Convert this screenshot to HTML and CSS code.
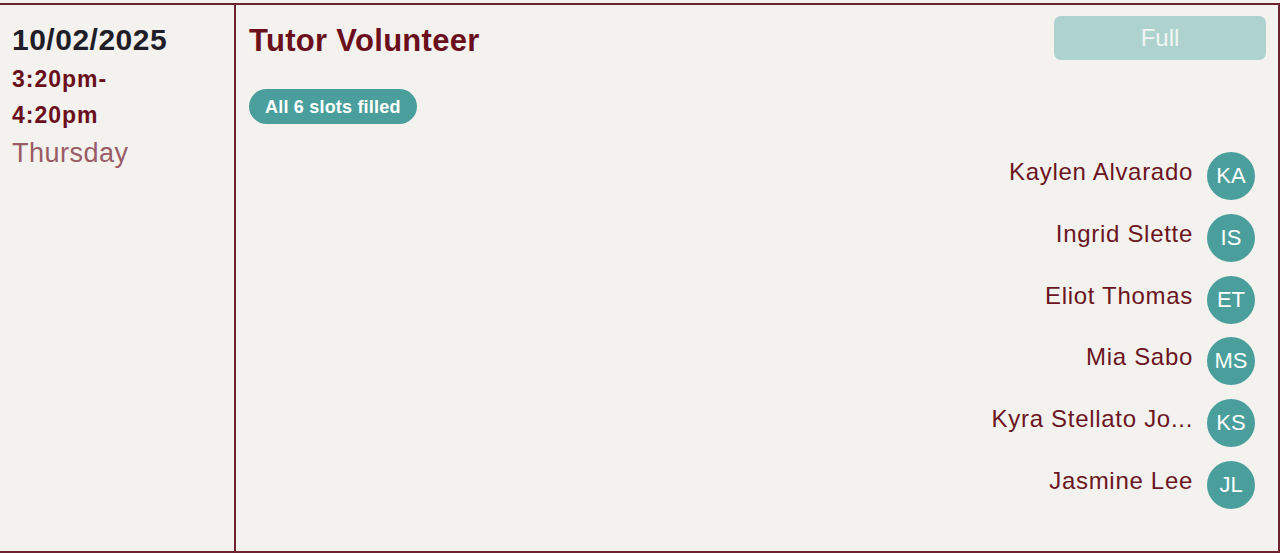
FILE: index.html
```html
<!DOCTYPE html>
<html lang="en">
<head>
<meta charset="utf-8">
<title>Tutor Volunteer</title>
<link rel="stylesheet" href="styles.css">
</head>
<body>
  <div class="slot-row">
    <div class="when">
      <div class="when-date">10/02/2025</div>
      <div class="when-time"><span>3:20pm-</span><span>4:20pm</span></div>
      <div class="when-day">Thursday</div>
    </div>
    <div class="detail">
      <div class="detail-head">
        <h2 class="detail-title">Tutor Volunteer</h2>
        <button class="full-btn" type="button" disabled>Full</button>
      </div>
      <div class="status-pill">All 6 slots filled</div>
      <ul class="people">
        <li class="person"><span class="person-name">Kaylen Alvarado</span><span class="avatar">KA</span></li>
        <li class="person"><span class="person-name">Ingrid Slette</span><span class="avatar">IS</span></li>
        <li class="person"><span class="person-name">Eliot Thomas</span><span class="avatar">ET</span></li>
        <li class="person"><span class="person-name">Mia Sabo</span><span class="avatar">MS</span></li>
        <li class="person"><span class="person-name">Kyra Stellato Jo...</span><span class="avatar">KS</span></li>
        <li class="person"><span class="person-name">Jasmine Lee</span><span class="avatar">JL</span></li>
      </ul>
    </div>
  </div>
</body>
</html>
```

FILE: styles.css
```css
* {
  box-sizing: border-box;
}

html, body {
  margin: 0;
  padding: 0;
  background: #f3f2ee;
  height: 553px;
  overflow: hidden;
}

body {
  font-family: "Liberation Sans", Arial, Helvetica, sans-serif;
  padding-top: 3px;
}

.slot-row {
  display: flex;
  width: 1280px;
  height: 550px;
  border-top: 2px solid #6d2430;
  border-right: 2px solid #6d2430;
  border-bottom: 2px solid #6d2430;
  background: #f3f2ee;
}

.when {
  width: 236px;
  flex: none;
  border-right: 2px solid #6d2430;
  padding: 17px 12px 0 12px;
}

.when-date {
  font-size: 30px;
  line-height: 36px;
  font-weight: 700;
  letter-spacing: 0.5px;
  color: #1f1d28;
}

.when-time {
  margin-top: 3px;
  font-size: 23px;
  line-height: 36px;
  font-weight: 700;
  letter-spacing: 1px;
  color: #6a0f1b;
}

.when-time span {
  display: block;
}

.when-day {
  margin-top: 2px;
  font-size: 27px;
  line-height: 36px;
  letter-spacing: 0.5px;
  color: #9a5c66;
}

.detail {
  flex: 1;
  padding: 11px 12px 0 12px;
  display: flex;
  flex-direction: column;
}

.detail-head {
  display: flex;
  justify-content: space-between;
  align-items: flex-start;
}

.detail-title {
  margin: 3px 0 0 1px;
  font-size: 31px;
  line-height: 44px;
  font-weight: 700;
  letter-spacing: 0.3px;
  color: #6a0f1b;
}

.full-btn {
  width: 212px;
  height: 44px;
  border: none;
  border-radius: 7px;
  background: #aed3cf;
  color: #f1f5f3;
  font-family: inherit;
  font-size: 24px;
  line-height: 44px;
  padding: 0;
}

.status-pill {
  align-self: flex-start;
  margin: 26px 0 0 1px;
  padding: 9px 16px 7px 16px;
  border-radius: 18px;
  background: #4a9f9c;
  color: #ffffff;
  font-size: 18px;
  line-height: 19px;
  font-weight: 700;
  letter-spacing: 0.2px;
}

.people {
  list-style: none;
  margin: 28px 11px 0 0;
  padding: 0;
  display: flex;
  flex-direction: column;
  align-items: flex-end;
  gap: 13.8px;
}

.person {
  display: flex;
  align-items: flex-start;
  gap: 14px;
}

.person-name {
  font-size: 24px;
  line-height: 39px;
  letter-spacing: 0.7px;
  color: #6b1522;
  white-space: nowrap;
}

.avatar {
  width: 48px;
  height: 48px;
  border-radius: 50%;
  background: #4a9e9b;
  color: #ffffff;
  font-size: 22px;
  line-height: 48px;
  text-align: center;
}
```
